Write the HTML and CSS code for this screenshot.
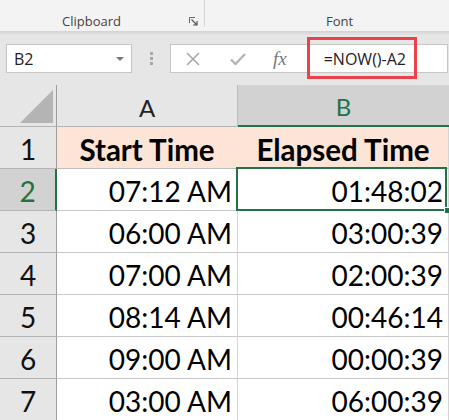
FILE: index.html
```html
<!DOCTYPE html>
<html lang="en">
<head>
<meta charset="utf-8">
<title>Elapsed Time</title>
<link rel="stylesheet" href="styles.css">
</head>
<body>
<div class="ribbon">
  <div class="group group-clip">
    <span class="glabel">Clipboard</span>
    <svg class="launcher" width="9" height="9" viewBox="0 0 9 9">
      <path d="M0.5 6 V0.5 H6" fill="none" stroke="#666" stroke-width="1"/>
      <path d="M2.5 2.5 L7.5 7.5 M8 4 V8 H4" fill="none" stroke="#555" stroke-width="1.2"/>
    </svg>
  </div>
  <div class="group group-font">
    <span class="glabel">Font</span>
  </div>
</div>
<div class="shade"></div>
<div class="fbar">
  <div class="namebox">
    <span class="nbtext">B2</span>
    <svg class="nbarrow" width="8" height="4" viewBox="0 0 8 4"><path d="M0 0 H8 L4 4 Z" fill="#777"/></svg>
  </div>
  <div class="dots"><i></i><i></i><i></i></div>
  <div class="fbox">
    <svg class="ico ico-x" width="14" height="14" viewBox="0 0 14 14"><path d="M1 1 L13 13 M13 1 L1 13" stroke="#a8a8a8" stroke-width="1.6" fill="none"/></svg>
    <svg class="ico ico-check" width="16" height="12" viewBox="0 0 16 12"><path d="M1 6.5 L5.5 11 L15 1" stroke="#b4b4b4" stroke-width="2.4" fill="none"/></svg>
    <span class="fx">fx</span>
    <span class="formula">=NOW()-A2</span>
    <div class="highlight"></div>
  </div>
</div>
<div class="sheet">
  <div class="corner"><div class="tri"></div></div>
  <div class="colhead">A</div>
  <div class="colhead colhead-sel">B</div>

  <div class="rowhead">1</div>
  <div class="cell title title-a">Start Time</div>
  <div class="cell title">Elapsed Time</div>

  <div class="rowhead rowhead-sel">2</div>
  <div class="cell num">07:12 AM</div>
  <div class="cell num active">01:48:02</div>

  <div class="rowhead">3</div>
  <div class="cell num">06:00 AM</div>
  <div class="cell num">03:00:39</div>

  <div class="rowhead">4</div>
  <div class="cell num">07:00 AM</div>
  <div class="cell num">02:00:39</div>

  <div class="rowhead">5</div>
  <div class="cell num">08:14 AM</div>
  <div class="cell num">00:46:14</div>

  <div class="rowhead">6</div>
  <div class="cell num">09:00 AM</div>
  <div class="cell num">00:00:39</div>

  <div class="rowhead">7</div>
  <div class="cell num">03:00 AM</div>
  <div class="cell num">06:00:39</div>
</div>
</body>
</html>
```
FILE: styles.css
```css
* { box-sizing: border-box; }
html, body { margin: 0; padding: 0; }
body {
  width: 449px;
  height: 420px;
  overflow: hidden;
  background: #e6e6e6;
  font-family: "Open Sans", "Noto Sans", sans-serif;
}

/* ribbon */
.ribbon {
  height: 31px;
  background: #f3f3f3;
  display: flex;
  align-items: flex-start;
}
.group {
  height: 26px;
  display: flex;
  align-items: flex-start;
  padding-top: 12px;
}
.group-clip {
  width: 205px;
  border-right: 1px solid #d2d2d2;
  padding-left: 62px;
}
.glabel {
  font-size: 13px;
  line-height: 18px;
  color: #444;
}
.launcher {
  margin-left: auto;
  margin-right: 6px;
  margin-top: 5px;
}
.group-font {
  padding-left: 121px;
}
.shade {
  height: 4px;
  background: linear-gradient(#d3d3d3, #e4e4e4);
}

/* formula bar */
.fbar {
  height: 50px;
  padding-top: 9px;
  display: flex;
  align-items: flex-start;
}
.namebox {
  margin-left: 6px;
  width: 126px;
  height: 29px;
  background: #fff;
  border: 1px solid #c6c6c6;
  display: flex;
  align-items: center;
  padding-left: 7px;
  padding-right: 7px;
}
.nbtext {
  font-size: 16px;
  color: #222;
}
.nbarrow { margin-left: auto; }
.dots {
  margin-left: 18px;
  width: 3px;
  height: 29px;
  display: flex;
  flex-direction: column;
  justify-content: center;
  gap: 2px;
}
.dots i {
  display: block;
  width: 3px;
  height: 3px;
  background: #a8a8a8;
}
.fbox {
  position: relative;
  margin-left: 17px;
  width: 278px;
  height: 29px;
  background: #fff;
  border: 1px solid #c6c6c6;
  display: flex;
  align-items: center;
}
.ico-x { margin-left: 15px; }
.ico-check { margin-left: 30px; }
.fx {
  margin-left: 27px;
  font-family: "Liberation Serif", "DejaVu Serif", serif;
  font-style: italic;
  font-size: 19px;
  color: #777;
  line-height: 1;
}
.formula {
  margin-left: 37px;
  font-size: 16px;
  color: #222;
}
.highlight {
  position: absolute;
  left: 136px;
  top: -8px;
  width: 110px;
  height: 42px;
  border: 3px solid #e8434a;
}

/* sheet */
.sheet {
  display: grid;
  grid-template-columns: 57px 181px 211px;
  grid-auto-rows: 42px;
  font-family: "Lato", "Open Sans", sans-serif;
}
.corner {
  background: #e6e6e6;
  border-right: 1px solid #9e9e9e;
  border-bottom: 1px solid #b4b4b4;
  display: flex;
  justify-content: flex-end;
  align-items: flex-end;
  padding: 0 3px 3px 0;
}
.tri {
  width: 33px;
  height: 33px;
  background: #b4b4b4;
  clip-path: polygon(100% 0, 100% 100%, 0 100%);
}
.colhead {
  background: #e6e6e6;
  border-right: 1px solid #bdbdbd;
  border-bottom: 1px solid #b4b4b4;
  font-size: 24px;
  color: #222;
  display: flex;
  justify-content: center;
  align-items: flex-end;
  padding-bottom: 4px;
}
.colhead-sel {
  background: #d2d2d2;
  color: #217346;
  border-right: none;
  border-bottom: 2px solid #217346;
}
.rowhead {
  background: #e6e6e6;
  border-right: 1px solid #9e9e9e;
  border-bottom: 1px solid #b4b4b4;
  font-size: 28px;
  color: #111;
  display: flex;
  justify-content: center;
  align-items: flex-end;
  padding-bottom: 2px;
}
.rowhead-sel {
  background: #d2d2d2;
  color: #217346;
  border-right: 2px solid #217346;
}
.cell {
  background: #fff;
  border-right: 1px solid #d4d4d4;
  border-bottom: 1px solid #c8c8c8;
  font-size: 28px;
  color: #000;
  display: flex;
  align-items: flex-end;
  padding-bottom: 2px;
}
.num {
  justify-content: flex-end;
  padding-right: 5px;
}
.title {
  background: #fce4d6;
  font-weight: 700;
  font-size: 29.5px;
  justify-content: center;
  border-bottom-color: #bdbdbd;
  padding-bottom: 1px;
}
.title-a { border-right-color: #fce4d6; }
.active {
  position: relative;
}
.active::after {
  content: "";
  position: absolute;
  left: -2px;
  top: -2px;
  right: 1px;
  bottom: -1px;
  border: 2px solid #217346;
}
.active::before {
  content: "";
  position: absolute;
  right: -1px;
  bottom: -3px;
  width: 4px;
  height: 5px;
  background: #217346;
  border-left: 1px solid #fff;
  border-top: 1px solid #fff;
  z-index: 1;
}
```
